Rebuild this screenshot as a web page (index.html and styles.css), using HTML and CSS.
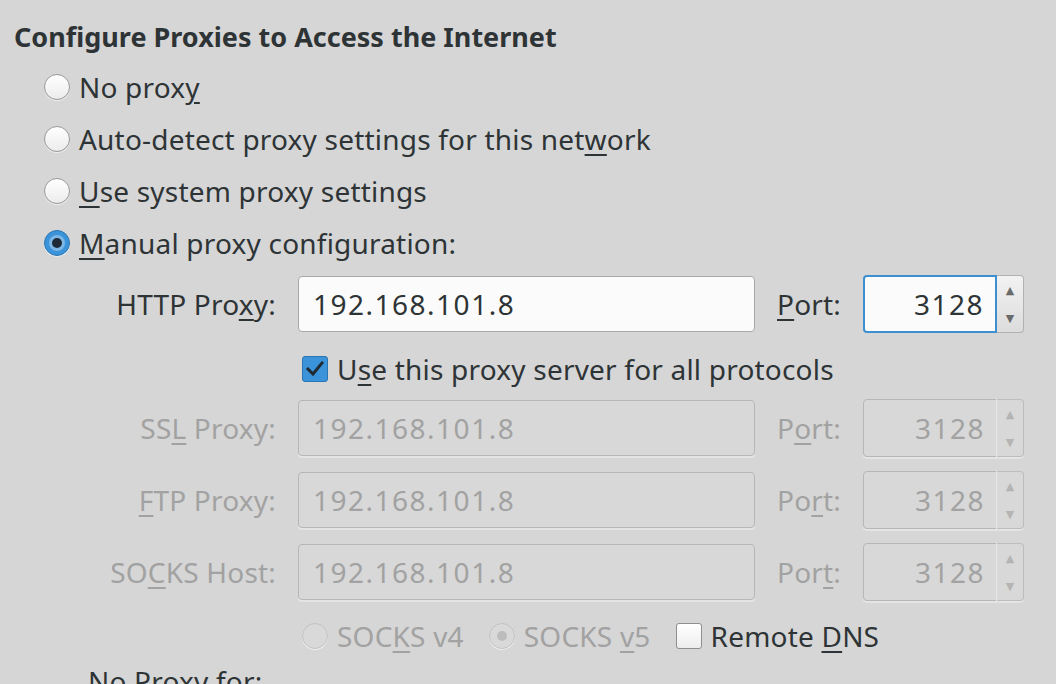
FILE: index.html
```html
<!DOCTYPE html>
<html>
<head>
    <title>Connection Settings</title>
    <link rel="stylesheet" href="styles.css">
</head>
<body>
    <div class="dialog">
        <h1 class="heading">Configure Proxies to Access the Internet</h1>

        <label class="choice"><span class="radio"></span><span>No prox<u>y</u></span></label>
        <label class="choice"><span class="radio"></span><span>Auto-detect proxy settings for this net<u>w</u>ork</span></label>
        <label class="choice"><span class="radio"></span><span><u>U</u>se system proxy settings</span></label>
        <label class="choice"><span class="radio checked"></span><span><u>M</u>anual proxy configuration:</span></label>

        <div class="proxy-grid">
            <div class="field-label">HTTP Pro<u>x</u>y:</div>
            <div class="text-box">192.168.101.8</div>
            <div class="port-label"><u>P</u>ort:</div>
            <div class="spin focused"><div class="spin-value">3128</div><div class="spin-btns"><span>&#9650;</span><span>&#9660;</span></div></div>

            <div class="all-protocols">
                <span class="check checked">
                    <svg width="20" height="20" viewBox="0 0 20 20"><path d="M3 10 L8 15 L17 4" fill="none" stroke="#1f2a33" stroke-width="3" stroke-linecap="square"/></svg>
                </span>
                <span>U<u>s</u>e this proxy server for all protocols</span>
            </div>

            <div class="field-label disabled">SS<u>L</u> Proxy:</div>
            <div class="text-box disabled">192.168.101.8</div>
            <div class="port-label disabled">P<u>o</u>rt:</div>
            <div class="spin disabled"><div class="spin-value">3128</div><div class="spin-btns"><span>&#9650;</span><span>&#9660;</span></div></div>

            <div class="field-label disabled"><u>F</u>TP Proxy:</div>
            <div class="text-box disabled">192.168.101.8</div>
            <div class="port-label disabled">Po<u>r</u>t:</div>
            <div class="spin disabled"><div class="spin-value">3128</div><div class="spin-btns"><span>&#9650;</span><span>&#9660;</span></div></div>

            <div class="field-label disabled">SO<u>C</u>KS Host:</div>
            <div class="text-box disabled">192.168.101.8</div>
            <div class="port-label disabled">Por<u>t</u>:</div>
            <div class="spin disabled"><div class="spin-value">3128</div><div class="spin-btns"><span>&#9650;</span><span>&#9660;</span></div></div>

            <div class="socks-row">
                <span class="mini disabled"><span class="radio"></span><span>SOC<u>K</u>S v4</span></span>
                <span class="mini disabled"><span class="radio checked"></span><span>SOCKS <u>v</u>5</span></span>
                <span class="mini"><span class="check"></span><span>Remote <u>D</u>NS</span></span>
            </div>
        </div>

        <div class="no-proxy">No Proxy for:</div>
    </div>
</body>
</html>
```

FILE: styles.css
```css
body {
    margin: 0;
    background-color: #d6d6d6;
    font-family: "Noto Sans", "DejaVu Sans", sans-serif;
    font-size: 28px;
    letter-spacing: 0.2px;
    color: #2e3436;
    overflow: hidden;
}
u {
    text-decoration-thickness: 2px;
    text-underline-offset: 4px;
}
.dialog {
    padding: 10px 0 0 14px;
}
.heading {
    margin: 0;
    height: 51px;
    line-height: 54px;
    font-size: 27px;
    font-weight: bold;
    letter-spacing: 0;
}
.choice {
    display: flex;
    align-items: center;
    height: 52px;
    line-height: 52px;
    margin-left: 30px;
    gap: 9px;
}
.radio {
    box-sizing: border-box;
    width: 26px;
    height: 26px;
    border-radius: 50%;
    border: 1px solid #9a9a9a;
    background: linear-gradient(#ffffff, #ececec);
    box-shadow: 0 1px 0 rgba(255,255,255,0.6);
    display: inline-flex;
    align-items: center;
    justify-content: center;
    flex-shrink: 0;
}
.radio.checked {
    background: #3b93d9;
    border: 1px solid #2a75b3;
}
.radio.checked::after {
    content: "";
    width: 10px;
    height: 10px;
    border-radius: 50%;
    background: #1e2a36;
    box-shadow: 0 0 0 3px #ffffff55;
}
.proxy-grid {
    display: grid;
    grid-template-columns: 188px 457px 64px 161px;
    grid-template-rows: 58px 38px 58px 58px 58px 42px;
    column-gap: 22px;
    row-gap: 14px;
    margin: 6px 0 0 74px;
    align-items: center;
    line-height: 40px;
}
.proxy-grid > .all-protocols {
    grid-column: 2 / 5;
    padding-top: 6px;
}
.field-label {
    text-align: right;
}
.disabled {
    color: #a2a2a2;
}
.text-box {
    box-sizing: border-box;
    height: 56px;
    border: 1px solid #a9a9a9;
    border-radius: 4px;
    background-color: #fbfbfb;
    padding: 0 14px;
    line-height: 54px;
    letter-spacing: 1.5px;
}
.text-box.disabled {
    background-color: #d8d8d8;
    border-color: #b6b6b6;
    box-shadow: 0 2px 0 #e4e4e4;
}
.spin {
    box-sizing: border-box;
    height: 58px;
    display: flex;
    border-radius: 4px;
}
.spin-value {
    box-sizing: border-box;
    width: 134px;
    border: 1px solid #a9a9a9;
    border-radius: 4px 0 0 4px;
    background-color: #fbfbfb;
    text-align: right;
    padding-right: 11px;
    line-height: 56px;
    letter-spacing: 1.5px;
}
.spin.focused .spin-value {
    border: 2px solid #3e8fd0;
    line-height: 54px;
}
.spin-btns {
    box-sizing: border-box;
    width: 27px;
    border: 1px solid #b2b2b2;
    border-left: none;
    border-radius: 0 4px 4px 0;
    background: linear-gradient(#f2f2f2, #dcdcdc);
    display: flex;
    flex-direction: column;
    justify-content: space-around;
    align-items: center;
    font-size: 11px;
    line-height: 14px;
    color: #6a6a6a;
}
.spin.disabled .spin-value {
    background-color: #d8d8d8;
    border-color: #b6b6b6;
}
.spin.disabled .spin-btns {
    background: #d8d8d8;
    border-color: #bdbdbd;
    color: #b4b4b4;
    box-shadow: -1px 0 0 #e6e6e6;
}
.spin.disabled {
    box-shadow: 0 2px 0 #e4e4e4;
}
.all-protocols {
    display: flex;
    align-items: center;
    gap: 9px;
    padding-left: 4px;
}
.check {
    box-sizing: border-box;
    width: 26px;
    height: 26px;
    border: 1px solid #8f8f8f;
    border-radius: 3px;
    background: linear-gradient(#ffffff, #ededed);
    display: inline-flex;
    align-items: center;
    justify-content: center;
    flex-shrink: 0;
}
.check.checked {
    background: #3b93d9;
    border-color: #2a75b3;
}
.socks-row {
    grid-column: 2 / 5;
    display: flex;
    align-items: center;
    gap: 25px;
    padding-left: 4px;
}
.mini {
    display: inline-flex;
    align-items: center;
    gap: 9px;
}
.mini.disabled .radio {
    background: #d9d9d9;
    border-color: #c2c2c2;
}
.mini.disabled .radio.checked::after {
    background: #bdbdbd;
    box-shadow: none;
}
.no-proxy {
    margin: 4px 0 0 74px;
    line-height: 40px;
}
```
